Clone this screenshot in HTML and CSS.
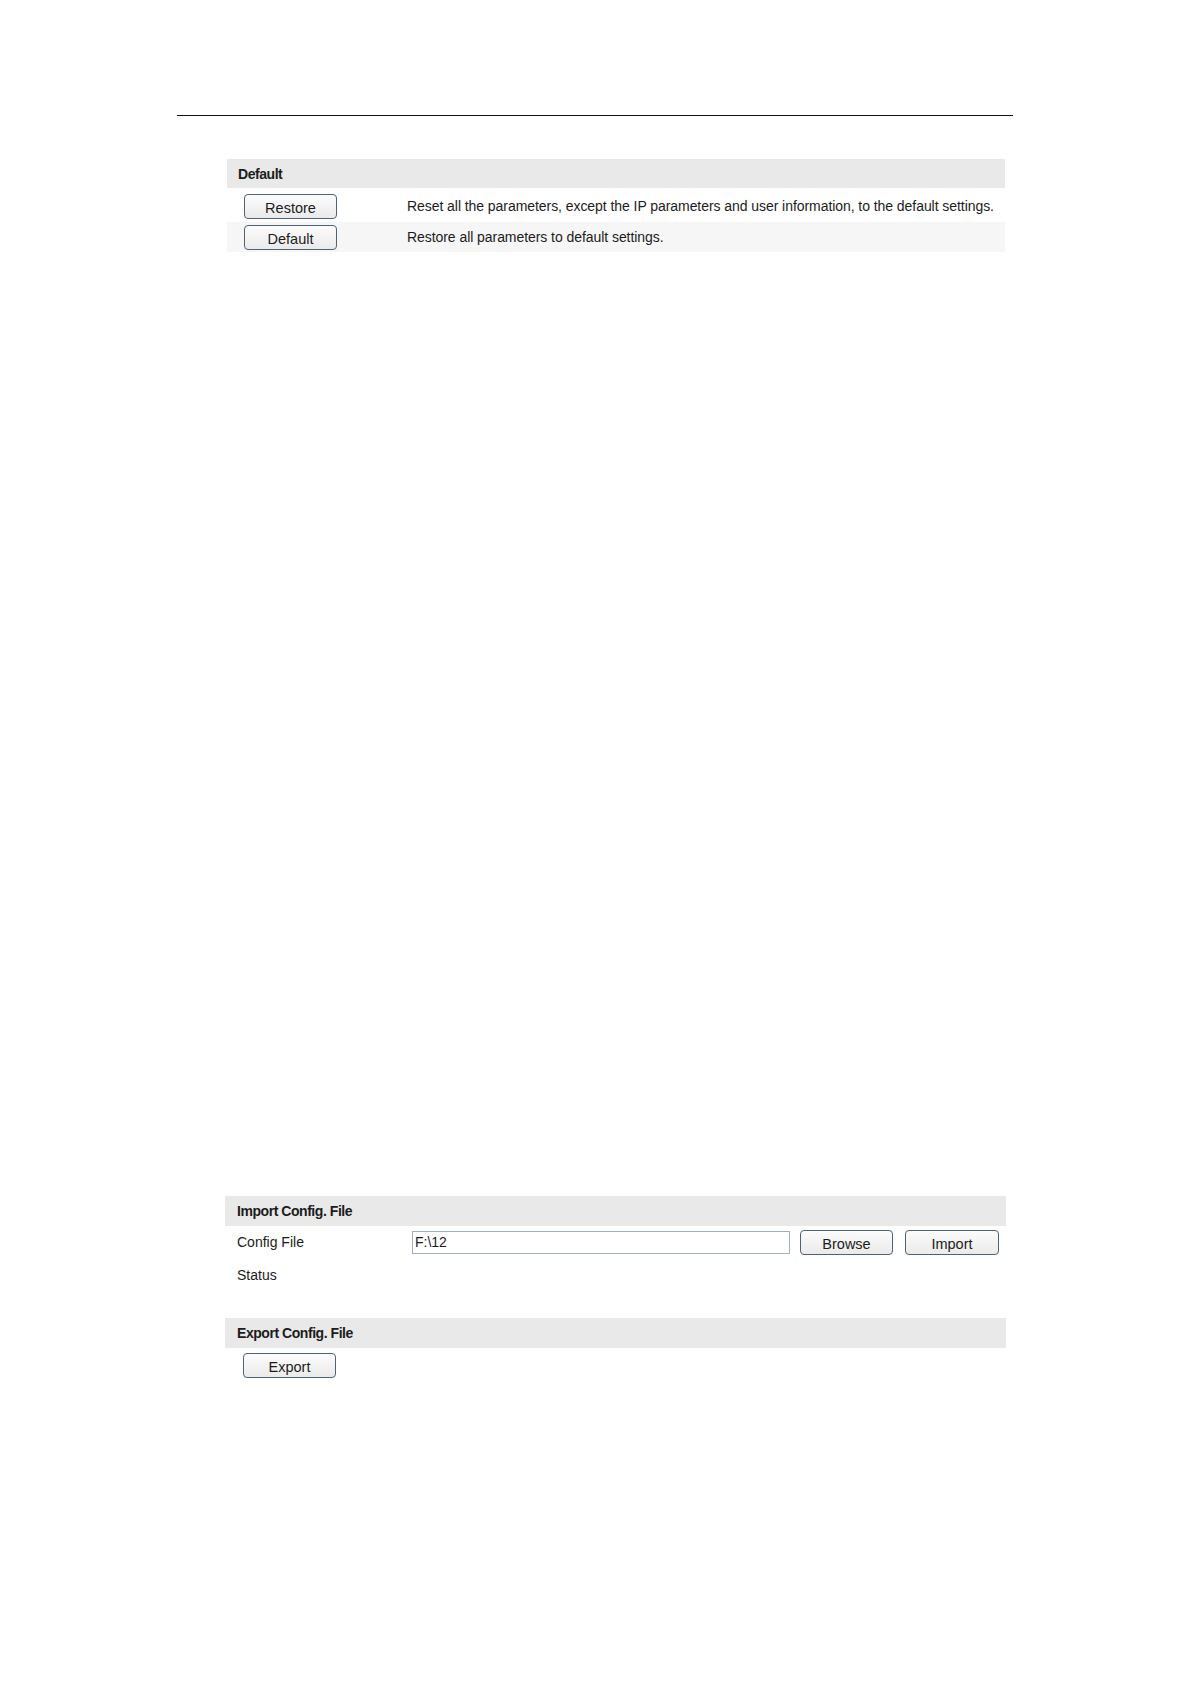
FILE: index.html
```html
<!DOCTYPE html>
<html lang="en">
<head>
    <meta charset="UTF-8">
    <title>Default / Config File</title>
    <link rel="stylesheet" href="styles.css">
</head>
<body>
    <div class="page-rule"></div>

    <div class="panel panel-default">
        <div class="panel-head">Default</div>
        <div class="rows">
            <div class="row">
                <div class="cell-btn"><button class="btn">Restore</button></div>
                <div class="cell-text">Reset all the parameters, except the IP parameters and user information, to the default settings.</div>
            </div>
            <div class="row row-alt">
                <div class="cell-btn"><button class="btn">Default</button></div>
                <div class="cell-text">Restore all parameters to default settings.</div>
            </div>
        </div>
    </div>

    <div class="panel panel-config">
        <div class="panel-head">Import Config. File</div>
        <div class="row row-file">
            <div class="cell-label">Config File</div>
            <input type="text" class="file-input" value="F:\12">
            <button class="btn btn-browse">Browse</button>
            <button class="btn btn-import">Import</button>
        </div>
        <div class="row row-status">
            <div class="cell-label">Status</div>
        </div>

        <div class="panel-head panel-head-export">Export Config. File</div>
        <div class="row row-export">
            <button class="btn">Export</button>
        </div>
    </div>
</body>
</html>
```

FILE: styles.css
```css
body {
    margin: 0;
    padding: 0;
    background: #fff;
    font-family: "Liberation Sans", Arial, sans-serif;
    font-size: 14px;
    color: #1c1c1c;
}
.page-rule {
    margin: 115px 0 0 177px;
    width: 836px;
    border-top: 1px solid #111;
}
.panel-default {
    margin: 43px 0 0 227px;
    width: 778px;
}
.panel-config {
    margin: 944px 0 0 225px;
    width: 781px;
}
.panel-head {
    height: 29px;
    line-height: 30px;
    background: #e9e9e9;
    font-weight: bold;
    padding-left: 11px;
    letter-spacing: -0.45px;
}
.panel-config .panel-head {
    height: 30px;
    line-height: 31px;
    padding-left: 12px;
}
.rows {
    padding-top: 3px;
    display: flex;
    flex-direction: column;
    gap: 1px;
}
.row {
    display: flex;
    align-items: center;
    height: 30px;
}
.row-alt {
    background: #f6f6f6;
}
.cell-btn {
    width: 180px;
    padding-left: 17px;
    box-sizing: border-box;
}
.cell-text {
    flex: 1;
    white-space: nowrap;
    letter-spacing: -0.06px;
}
.btn {
    width: 93px;
    height: 25px;
    padding: 3px 0 0;
    border: 1px solid #4f6376;
    border-radius: 4px;
    background: linear-gradient(to bottom, #fcfcfc, #eaeaea);
    font-family: "Liberation Sans", Arial, sans-serif;
    font-size: 14.5px;
    color: #1c1c1c;
    cursor: pointer;
}
.row-file {
    height: 32px;
}
.cell-label {
    width: 187px;
    padding-left: 12px;
    box-sizing: border-box;
}
.file-input {
    width: 378px;
    height: 23px;
    box-sizing: border-box;
    border: 1px solid #9fb0c2;
    padding: 0 2px;
    font-family: "Liberation Sans", Arial, sans-serif;
    font-size: 14px;
    color: #1c1c1c;
}
.btn-browse {
    margin-left: 10px;
}
.btn-import {
    margin-left: 12px;
    width: 94px;
}
.row-status {
    height: 34px;
}
.panel-head-export {
    margin-top: 26px;
}
.row-export {
    height: 34px;
    padding-left: 18px;
}
```
